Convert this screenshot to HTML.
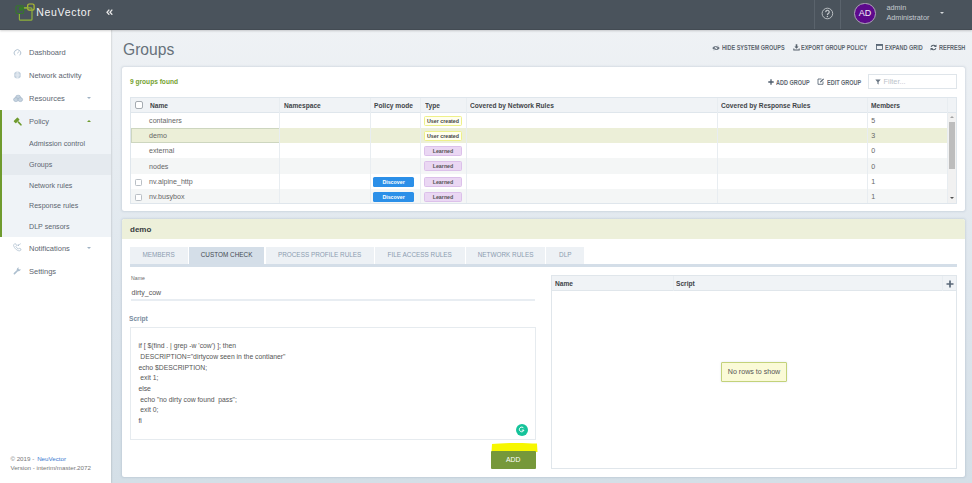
<!DOCTYPE html>
<html><head><meta charset="utf-8">
<style>
*{box-sizing:border-box;margin:0;padding:0}
html,body{width:972px;height:483px;overflow:hidden;font-family:"Liberation Sans",sans-serif;background:#fff}
.a{position:absolute;white-space:nowrap}
#hdr{position:absolute;left:0;top:0;width:972px;height:29.6px;background:#4a535c;border-bottom:1.2px solid #434b53;box-shadow:0 1px 2px rgba(0,0,0,.18);z-index:5}
#side{position:absolute;left:0;top:29px;width:111px;height:454px;background:#fff;box-shadow:0.6px 0 1.2px rgba(0,0,0,.1);z-index:3}
#main{position:absolute;left:111px;top:29px;width:861px;height:454px;background:linear-gradient(#eff2f5 0px,#ebeff3 60px,#e2e9ef 200px,#dee6ed 260px,#d4dfe7 454px)}
.nav{position:absolute;left:28.8px;font-size:7.9px;color:#5c6670;line-height:10px;margin-top:0.6px;transform:scaleX(.95);transform-origin:0 0}
.card{position:absolute;background:#fff;border-radius:2px;box-shadow:0 0 1px rgba(0,0,0,.08)}
.tb{position:absolute;font-size:6.4px;font-weight:bold;color:#5e6770;line-height:8px;margin-top:0.3px;transform:scaleX(0.86);transform-origin:0 0}
.th{position:absolute;top:1.1px;height:14px;line-height:14px;font-size:7px;font-weight:bold;color:#3f4448;transform:scaleX(.945);transform-origin:0 0}
.td{position:absolute;font-size:7.1px;color:#666;line-height:15.1px;padding-top:1.1px}
.row{position:absolute;left:0;width:817.5px;height:15.2px}
.vl{position:absolute;top:0;width:1px;background:#e8edf1}
.badge{position:absolute;height:10px;line-height:9px;font-size:5.3px;font-weight:bold;text-align:center;border-radius:1.5px}
.ub{border:1px solid #eef08a;background:#fffff0;color:#444}
.lb{border:1px solid #dcc0ea;background:#ead7f3;color:#555}
.db{background:#2b8fe8;color:#fff}
.tab{position:absolute;top:0;height:17px;line-height:16px;font-size:6.4px;color:#8c9cb0;background:#edf1f5;text-align:center}
.sub{transform:scaleX(.9);margin-top:0.3px}
.scr{position:absolute;left:7.9px;font-size:6.8px;color:#555;line-height:10.7px;margin-top:1.1px}
</style></head><body>

<div id="hdr">
  <!-- logo -->
  <svg class="a" style="left:15px;top:2px" width="21" height="20" viewBox="0 0 21 20">
    <rect x="12.7" y="2" width="6.4" height="6.1" rx="1.4" fill="none" stroke="#b3c12e" stroke-width="1.2"/>
    <rect x="4.4" y="5.9" width="12.6" height="12.3" rx="1" fill="none" stroke="#8fb13a" stroke-width="1.2"/>
    <rect x="1" y="3.7" width="7.7" height="7.8" rx="1.4" fill="#4a535c" stroke="#367a2a" stroke-width="1.1"/>
    <circle cx="6" cy="6.8" r="2.2" fill="#367a2a"/>
    <path d="M9 5.9 H12.7" stroke="#8fb13a" stroke-width="1.2"/>
  </svg>
  <div class="a" style="left:36.2px;top:4px;font-size:10.5px;letter-spacing:0.7px;line-height:16px;color:#f4f4f4">NeuVector</div>
  <svg class="a" style="left:106px;top:9px" width="7" height="6.4" viewBox="0 0 7 6.4"><path d="M3.3 0.6 L1 3.2 L3.3 5.8 M6.3 0.6 L4 3.2 L6.3 5.8" stroke="#e6e6e6" stroke-width="1.3" fill="none"/></svg>
  <div class="a" style="left:814px;top:0;width:1px;height:29px;background:#5a636c"></div>
  <div class="a" style="left:840px;top:0;width:1px;height:29px;background:#5a636c"></div>
  <svg class="a" style="left:821px;top:6.5px" width="13" height="13" viewBox="0 0 13 13"><circle cx="6.4" cy="6.5" r="5.3" fill="none" stroke="#c3c7cb" stroke-width="0.9"/><path d="M4.7 5.1 A1.75 1.75 0 1 1 7.2 6.6 C6.6 6.9 6.4 7.2 6.4 7.9" fill="none" stroke="#c3c7cb" stroke-width="1.2"/><circle cx="6.4" cy="9.5" r="0.75" fill="#c3c7cb"/></svg>
  <div class="a" style="left:854.3px;top:2.5px;width:21.5px;height:21.5px;border-radius:50%;background:#5d0a8c;border:0.8px solid #b0a6ba"></div>
  <div class="a" style="left:854.3px;top:2.8px;width:21.5px;height:21.5px;line-height:21.5px;text-align:center;font-size:9px;color:#f2eef6">AD</div>
  <div class="a" style="left:886.4px;top:2.5px;font-size:7.3px;line-height:10px;color:#c5cacf">admin</div>
  <div class="a" style="left:886.4px;top:13.3px;font-size:7.3px;line-height:10px;color:#c5cacf">Administrator</div>
  <div class="a" style="left:939.6px;top:11.9px;width:0;height:0;border-left:2.4px solid transparent;border-right:2.4px solid transparent;border-top:2.9px solid #d6d9dc"></div>
</div>

<div id="side">
  <!-- Dashboard -->
  <svg class="a" style="left:12px;top:18.9px" width="11" height="10" viewBox="0 0 11 10"><path d="M3.12 7.33 A3.3 3.3 0 1 1 7.78 7.33" fill="none" stroke="#b3c3d2" stroke-width="1"/><path d="M5.3 5.2 L6.9 3.7" stroke="#b3c3d2" stroke-width="1"/></svg>
  <div class="nav" style="top:18.5px">Dashboard</div>
  <!-- Network -->
  <svg class="a" style="left:12px;top:41.1px" width="11" height="10" viewBox="0 0 11 10"><circle cx="5.45" cy="5" r="3.5" fill="#c3d1de"/><path d="M1.9 5 H9 M5.45 1.5 V8.5" stroke="#eef2f6" stroke-width="0.6"/><path d="M5.45 1.5 C3.8 3 3.8 7 5.45 8.5 M5.45 1.5 C7.1 3 7.1 7 5.45 8.5" fill="none" stroke="#eef2f6" stroke-width="0.5"/></svg>
  <div class="nav" style="top:41.5px">Network activity</div>
  <!-- Resources -->
  <svg class="a" style="left:12px;top:64px" width="12" height="10" viewBox="0 0 12 10"><ellipse cx="6.1" cy="4.3" rx="2.5" ry="2.1" fill="#c6d3df" stroke="#a3b6c8" stroke-width="0.7"/><ellipse cx="3.9" cy="6.6" rx="2.3" ry="2" fill="#c6d3df" stroke="#a3b6c8" stroke-width="0.7"/><ellipse cx="8.3" cy="6.6" rx="2.3" ry="2" fill="#c6d3df" stroke="#a3b6c8" stroke-width="0.7"/></svg>
  <div class="nav" style="top:64.5px">Resources</div>
  <div class="a" style="left:86.6px;top:68.4px;border-left:2.6px solid transparent;border-right:2.6px solid transparent;border-top:2.6px solid #9fb2c4"></div>
  <!-- Policy section -->
  <div class="a" style="left:0;top:81px;width:111px;height:127px;background:#eff3f7"></div>
  <div class="a" style="left:0;top:81px;width:2px;height:127px;background:#6f9b2e"></div>
  <div class="a" style="left:2px;top:125.1px;width:109px;height:21px;background:#e5eaef"></div>
  <svg class="a" style="left:12px;top:87px" width="10" height="10" viewBox="0 0 10 10"><rect x="3" y="1.65" width="3.2" height="5.5" rx="0.6" fill="#6f9b2e" transform="rotate(45 4.6 4.4)"/><path d="M6.4 6.1 L8.9 8.8" stroke="#6f9b2e" stroke-width="1.6" stroke-linecap="round"/></svg>
  <div class="nav" style="top:87.8px">Policy</div>
  <div class="a" style="left:86.6px;top:90.8px;border-left:2.6px solid transparent;border-right:2.6px solid transparent;border-bottom:2.6px solid #6f9b2e"></div>
  <div class="nav sub" style="top:110px">Admission control</div>
  <div class="nav sub" style="top:130.9px">Groups</div>
  <div class="nav sub" style="top:151.7px">Network rules</div>
  <div class="nav sub" style="top:172.1px">Response rules</div>
  <div class="nav sub" style="top:193.1px">DLP sensors</div>
  <!-- Notifications -->
  <svg class="a" style="left:12px;top:213px" width="11" height="11" viewBox="0 0 11 11"><path d="M2.6 2 L3.8 1.8 L4.6 3.6 L3.8 4.4 C4.4 5.6 5.2 6.4 6.4 7 L7.2 6.2 L9 7 L8.8 8.2 C8.4 8.8 7.6 9 6.8 8.8 C4.4 8.2 2.2 6 1.6 3.6 C1.4 2.8 1.8 2.2 2.6 2 Z" fill="none" stroke="#b3c3d2" stroke-width="0.8"/><path d="M5.6 2.6 H7 V4 H5.6 Z" fill="#b3c3d2"/><path d="M6.4 3.2 L8.8 1.6" stroke="#b3c3d2" stroke-width="0.7"/></svg>
  <div class="nav" style="top:214.4px">Notifications</div>
  <div class="a" style="left:86.6px;top:218.3px;border-left:2.6px solid transparent;border-right:2.6px solid transparent;border-top:2.6px solid #9fb2c4"></div>
  <!-- Settings -->
  <svg class="a" style="left:12px;top:237px" width="10" height="10" viewBox="0 0 10 10"><path d="M2.4 7.6 L5.8 4.2" stroke="#adbfcf" stroke-width="1.6" stroke-linecap="round"/><path d="M5 4.6 A2.1 2.1 0 0 1 7 1.5 L6.3 2.8 L7.3 3.6 L8.6 2.9 A2.1 2.1 0 0 1 5 4.6 Z" fill="#adbfcf"/></svg>
  <div class="nav" style="top:237px">Settings</div>
  <!-- footer -->
  <div class="a" style="left:10.4px;top:426.1px;font-size:6.2px;line-height:8px;color:#777">© 2019 - <span style="color:#3b78d0;margin-left:1.2px">NeuVector</span></div>
  <div class="a" style="left:10.4px;top:434.8px;font-size:6.2px;line-height:8px;color:#777">Version - interim/master.2072</div>
</div>

<div id="main">
  <div class="a" style="left:11.7px;top:10.7px;font-size:17px;line-height:20px;color:#67717b;transform:scaleX(0.92);transform-origin:0 0">Groups</div>
  <!-- toolbar -->
  <svg class="a" style="left:601px;top:15.5px" width="8" height="6" viewBox="0 0 8 6"><path d="M0.3 3 C2 0.3 6 0.3 7.7 3 C6 5.7 2 5.7 0.3 3 Z" fill="#66717c"/><circle cx="4" cy="3" r="1.3" fill="#eef1f5"/><path d="M1.6 5.6 L6.4 0.4" stroke="#eef1f5" stroke-width="0.9"/><path d="M2 5.4 L6 0.6" stroke="#56616c" stroke-width="0.5"/></svg>
  <div class="tb" style="left:610.5px;top:14.6px">HIDE SYSTEM GROUPS</div>
  <svg class="a" style="left:682px;top:14.6px" width="7" height="7" viewBox="0 0 7 7"><path d="M2.7 0.3 H4.3 V2.6 H5.6 L3.5 4.8 L1.4 2.6 H2.7 Z" fill="#56616c"/><path d="M0.3 4.6 V6.6 H6.7 V4.6 H5.7 V5.6 H1.3 V4.6 Z" fill="#56616c"/></svg>
  <div class="tb" style="left:690.3px;top:14.6px">EXPORT GROUP POLICY</div>
  <svg class="a" style="left:764.5px;top:15px" width="7" height="6" viewBox="0 0 7 6"><rect x="0.5" y="0.5" width="6" height="5" fill="none" stroke="#4d5b6b" stroke-width="0.8"/><rect x="0.5" y="0.5" width="6" height="1.3" fill="#4d5b6b"/></svg>
  <div class="tb" style="left:773.7px;top:14.6px">EXPAND GRID</div>
  <svg class="a" style="left:819px;top:14.8px" width="7" height="7" viewBox="0 0 7 7"><path d="M5.6 2.4 A2.5 2.5 0 0 0 1.1 2.9 M1.4 4.6 A2.5 2.5 0 0 0 5.9 4.1" stroke="#56616c" stroke-width="1.1" fill="none"/><path d="M6.5 0.4 V3.1 H3.8 Z M0.5 6.6 V3.9 H3.2 Z" fill="#56616c"/></svg>
  <div class="tb" style="left:828.3px;top:14.6px">REFRESH</div>

  <!-- card 1 -->
  <div class="a" style="left:11px;top:37.85px;width:842.8px;height:144.15px;background:#fff;border-radius:2.5px;box-shadow:0 0 2px 0.5px rgba(70,90,120,.13)"></div>
  <div class="a" style="left:11px;top:37.3px;width:842.5px;height:144px">
    <div class="a" style="left:8px;top:11px;font-size:6.6px;line-height:9px;font-weight:bold;color:#74a12f">9 groups found</div>
    <svg class="a" style="left:646.3px;top:13px" width="6" height="6" viewBox="0 0 6 6"><path d="M3 0.3 V5.7 M0.3 3 H5.7" stroke="#4d5b6b" stroke-width="1.3"/></svg>
    <div class="tb" style="left:654px;top:12.1px">ADD GROUP</div>
    <svg class="a" style="left:694.8px;top:12px" width="7.5" height="7" viewBox="0 0 7.5 7"><path d="M4.5 1 H1 V6.3 H6 V3.5" stroke="#4d5b6b" stroke-width="0.8" fill="none"/><path d="M3 4.5 L3.3 3.3 L6.3 0.5 L7 1.2 L4 4.2 Z" fill="#4d5b6b"/></svg>
    <div class="tb" style="left:704.5px;top:12.1px">EDIT GROUP</div>
    <div class="a" style="left:746.2px;top:7.8px;width:88.8px;height:15.4px;border:1px solid #dfe5ea;background:#fff"></div>
    <svg class="a" style="left:752.6px;top:12.7px" width="6" height="6" viewBox="0 0 6 6"><path d="M0.3 0.5 H5.7 L3.6 3 V5.6 L2.4 4.8 V3 Z" fill="#6b7784"/></svg>
    <div class="a" style="left:761.6px;top:10.8px;font-size:7.3px;line-height:9px;color:#bcc3ca">Filter...</div>

    <!-- table -->
    <div class="a" style="left:7.6px;top:30.55px;width:827.1px;height:107.25px;border:1px solid #dfe6ec;background:#fff;overflow:hidden">
      <div class="a" style="left:0;top:0;width:825.10px;height:15.00px;background:#f0f3f6;border-bottom:1px solid #dfe6ec"></div>
      <div class="a" style="left:0;top:15.00px;width:817.60px;height:15.20px;background:#fff"></div>
      <div class="a" style="left:0;top:30.20px;width:817.60px;height:15.20px;background:#ecefd8"></div>
      <div class="a" style="left:0;top:45.40px;width:817.60px;height:15.20px;background:#fff"></div>
      <div class="a" style="left:0;top:60.60px;width:817.60px;height:15.20px;background:#f4f6f6"></div>
      <div class="a" style="left:0;top:75.80px;width:817.60px;height:15.20px;background:#fff"></div>
      <div class="a" style="left:0;top:91.00px;width:817.60px;height:15.20px;background:#f4f6f6"></div>
      <div class="a" style="left:0;top:30.10px;width:149.40px;height:15.30px;border:1px solid #cdd6bf"></div>
      <div class="vl" style="left:148.40px;height:106.20px"></div>
      <div class="vl" style="left:239.10px;height:106.20px"></div>
      <div class="vl" style="left:289.50px;height:106.20px"></div>
      <div class="vl" style="left:335.20px;height:106.20px"></div>
      <div class="vl" style="left:586.20px;height:106.20px"></div>
      <div class="vl" style="left:736.50px;height:106.20px"></div>
      <div class="vl" style="left:816.60px;height:106.20px"></div>
      <div class="a" style="left:4.30px;top:3.35px;width:8px;height:7.5px;border:1px solid #a5abb1;border-radius:2px;background:#fff"></div>
      <div class="th" style="left:19.20px">Name</div>
      <div class="th" style="left:153.00px">Namespace</div>
      <div class="th" style="left:243.10px">Policy mode</div>
      <div class="th" style="left:294.10px">Type</div>
      <div class="th" style="left:339.50px">Covered by Network Rules</div>
      <div class="th" style="left:590.40px">Covered by Response Rules</div>
      <div class="th" style="left:740.60px">Members</div>
      <div class="td" style="left:18.50px;top:15.00px">containers</div>
      <div class="td" style="left:740.60px;top:15.00px">5</div>
      <div class="badge ub" style="left:293.50px;top:17.90px;width:37.8px">User created</div>
      <div class="td" style="left:18.50px;top:30.20px">demo</div>
      <div class="td" style="left:740.60px;top:30.20px">3</div>
      <div class="badge ub" style="left:293.50px;top:33.10px;width:37.8px">User created</div>
      <div class="td" style="left:18.50px;top:45.40px">external</div>
      <div class="td" style="left:740.60px;top:45.40px">0</div>
      <div class="badge lb" style="left:293.50px;top:48.30px;width:37.8px">Learned</div>
      <div class="td" style="left:18.50px;top:60.60px">nodes</div>
      <div class="td" style="left:740.60px;top:60.60px">0</div>
      <div class="badge lb" style="left:293.50px;top:63.50px;width:37.8px">Learned</div>
      <div class="td" style="left:18.50px;top:75.80px">nv.alpine_http</div>
      <div class="td" style="left:740.60px;top:75.80px">1</div>
      <div class="badge lb" style="left:293.50px;top:78.70px;width:37.8px">Learned</div>
      <div class="a" style="left:4.50px;top:80.80px;width:7px;height:7px;border:1px solid #b9bfc5;border-radius:1.3px;background:#fff"></div>
      <div class="badge db" style="left:242.70px;top:79.00px;width:40.6px;line-height:10px">Discover</div>
      <div class="td" style="left:18.50px;top:91.00px">nv.busybox</div>
      <div class="td" style="left:740.60px;top:91.00px">1</div>
      <div class="badge lb" style="left:293.50px;top:93.90px;width:37.8px">Learned</div>
      <div class="a" style="left:4.50px;top:96.00px;width:7px;height:7px;border:1px solid #b9bfc5;border-radius:1.3px;background:#fff"></div>
      <div class="badge db" style="left:242.70px;top:94.20px;width:40.6px;line-height:10px">Discover</div>
      <div class="a" style="left:817.60px;top:15.00px;width:8.6px;height:91.20px;background:#f1f1f1"></div>
      <div class="a" style="left:818.60px;top:23.75px;width:6px;height:47.4px;background:#bdbdbd"></div>
      <div class="a" style="left:819.60px;top:18.15px;border-left:2px solid transparent;border-right:2px solid transparent;border-bottom:2px solid #a3a3a3"></div>
      <div class="a" style="left:819.60px;top:99.45px;border-left:2px solid transparent;border-right:2px solid transparent;border-top:2px solid #505050"></div>
    </div>
  </div>

  <!-- card 2 -->
  <div class="card" style="left:11px;top:189.8px;width:842.8px;height:258px;overflow:hidden;border-radius:2.5px;box-shadow:0 0 2px 0.5px rgba(70,90,120,.13)">
    <div class="a" style="left:0;top:0;width:842.8px;height:19.8px;background:#edf0da"></div>
    <div class="a" style="left:8px;top:6.5px;font-size:8px;line-height:10px;font-weight:bold;color:#383c40">demo</div>

    <div class="a" style="left:7.5px;top:28px;width:827.8px;height:20.2px">
      <div class="tab" style="left:0;width:58.1px">MEMBERS</div>
      <div class="tab" style="left:59.1px;width:75.9px;background:#d4dee8;color:#454b52">CUSTOM CHECK</div>
      <div class="tab" style="left:136px;width:108.3px">PROCESS PROFILE RULES</div>
      <div class="tab" style="left:245.3px;width:89.9px">FILE ACCESS RULES</div>
      <div class="tab" style="left:336.2px;width:79.7px">NETWORK RULES</div>
      <div class="tab" style="left:416.9px;width:37.8px">DLP</div>
      <div class="a" style="left:0;top:17px;width:827.8px;height:3px;background:#d4dee8"></div>
    </div>

    <div class="a" style="left:9px;top:56.5px;font-size:5.2px;line-height:6px;color:#6a6a6a">Name</div>
    <div class="a" style="left:9.6px;top:69.6px;font-size:7px;line-height:9px;color:#555">dirty_cow</div>
    <div class="a" style="left:9px;top:80.5px;width:404.2px;height:1.5px;background:#e8edf2"></div>
    <div class="a" style="left:7.2px;top:95.5px;font-size:7.2px;line-height:9px;color:#7b8da0;font-weight:bold;transform:scaleX(.92);transform-origin:0 0">Script</div>

    <div class="a" style="left:7.5px;top:108px;width:406px;height:113.4px;border:1px solid #e6ebef;background:#fff">
      <div class="scr" style="top:12.15px">if [ $(find . | grep -w 'cow') ]; then</div>
      <div class="scr" style="top:22.85px">&nbsp;DESCRIPTION="dirtycow seen in the contianer"</div>
      <div class="scr" style="top:33.75px">echo $DESCRIPTION;</div>
      <div class="scr" style="top:44.35px">&nbsp;exit 1;</div>
      <div class="scr" style="top:54.95px">else</div>
      <div class="scr" style="top:65.85px">&nbsp;echo "no dirty cow found &nbsp;pass";</div>
      <div class="scr" style="top:76.05px">&nbsp;exit 0;</div>
      <div class="scr" style="top:86.95px">fi</div>
      <div class="a" style="left:385.1px;top:95.9px;width:12px;height:12px;border-radius:50%;background:#15c39a"></div>
      <svg class="a" style="left:387.5px;top:98.3px" width="7.2" height="7.2" viewBox="0 0 8 8"><path d="M6.3 2.4 A2.6 2.6 0 1 0 6.6 4.6 H4.2" fill="none" stroke="#fff" stroke-width="1.1"/></svg>
    </div>

    <!-- highlight + button -->
    <svg class="a" style="left:368.5px;top:222.8px" width="47" height="11" viewBox="0 0 47 11"><path d="M1 2 C10 1 30 0.3 46 1.6 L46.5 10 L0.5 10 Z" fill="#f7f700"/></svg>
    <div class="a" style="left:368.8px;top:232px;width:44.8px;height:17.9px;background:#76983a;border-radius:1px;color:#fff;font-size:6.8px;line-height:17.9px;text-align:center">ADD</div>

    <!-- right table -->
    <div class="a" style="left:429.4px;top:56.2px;width:406px;height:194px;border:1px solid #e0e6eb;background:#fff">
      <div class="a" style="left:0;top:0;width:404px;height:15.5px;background:#f0f3f6;border-bottom:1px solid #e0e6eb"></div>
      <div class="vl" style="left:120.7px;height:15.5px"></div>
      <div class="vl" style="left:389.6px;height:15.5px"></div>
      <div class="th" style="left:2.8px;top:-0.1px;height:15.5px;line-height:15.5px">Name</div>
      <div class="th" style="left:124px;top:-0.1px;height:15.5px;line-height:15.5px">Script</div>
      <svg class="a" style="left:393.8px;top:3.7px" width="8" height="8" viewBox="0 0 8 8"><path d="M4 0.5 V7.5 M0.5 4 H7.5" stroke="#5a6878" stroke-width="1.7"/></svg>
      <div class="a" style="left:169.1px;top:85.9px;width:65.1px;height:20.1px;background:#fafad7;border:1.2px solid #c3d27a;border-radius:1px;box-shadow:0 0 2px rgba(120,140,200,.25);font-size:7.1px;line-height:18px;color:#555;text-align:center">No rows to show</div>
    </div>
  </div>
</div>
</body></html>
